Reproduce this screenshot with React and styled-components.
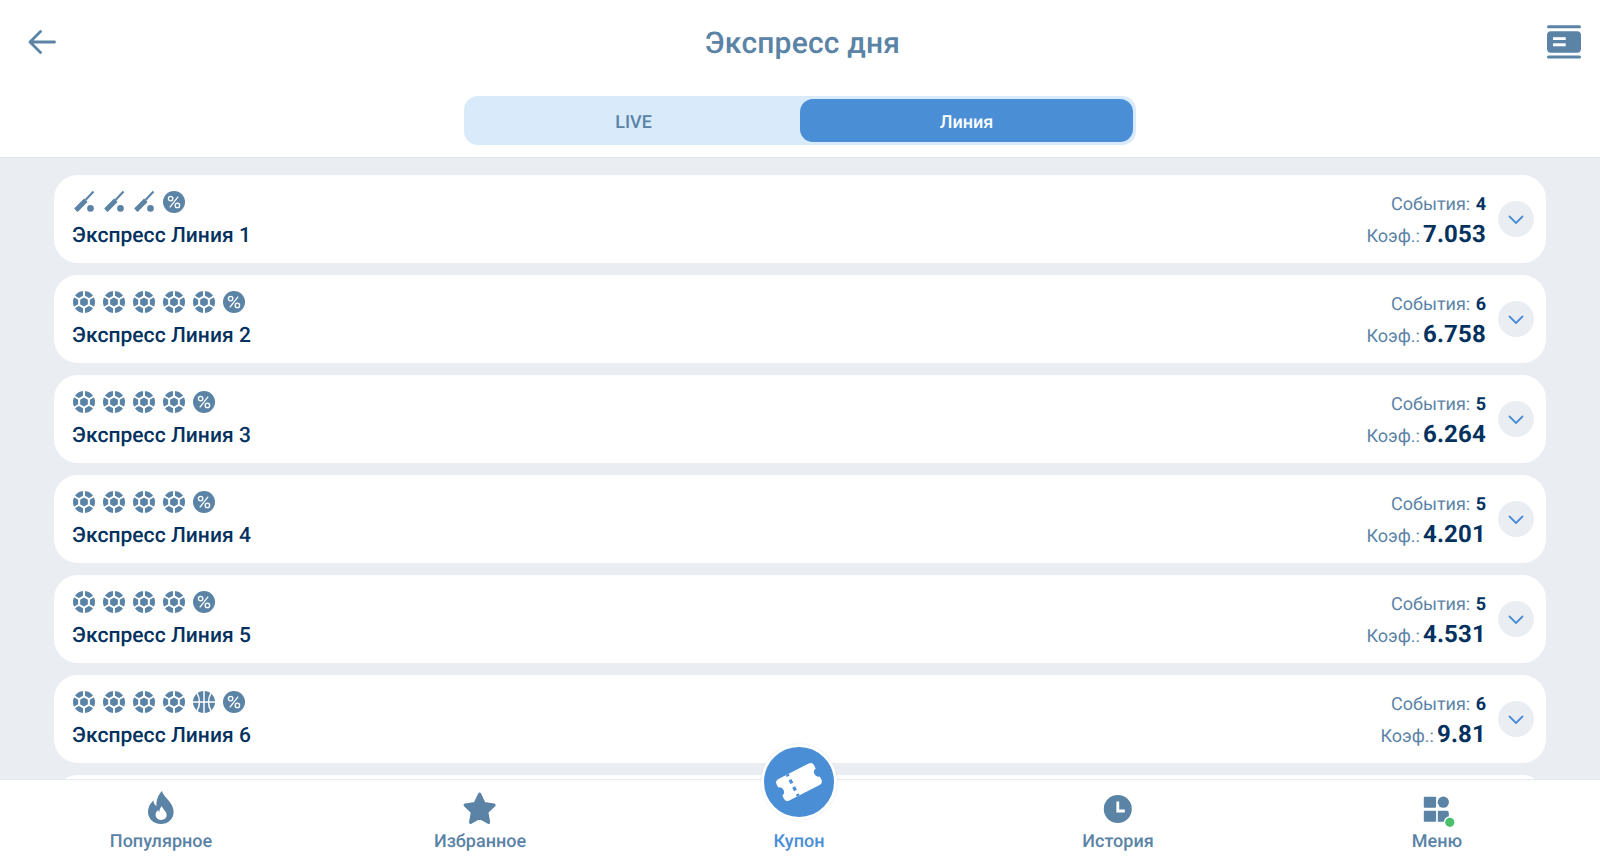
import React from "react";
import styled, { createGlobalStyle } from "styled-components";

const Global = createGlobalStyle`
  html, body { margin: 0; padding: 0; height: 100%; background: #fff; }
  body { font-family: Roboto, "Liberation Sans", sans-serif; overflow: hidden; text-rendering: geometricPrecision; }
  * { box-sizing: border-box; }
`;

const MUTED = "#5a83a6";
const DARK = "#04315e";
const BLUE = "#4a8ed6";
const GREY = "#eaeef3";

const Page = styled.div`
  width: 1600px; height: 864px; display: flex; flex-direction: column; background: ${GREY};
`;
const Header = styled.header`
  flex: 0 0 158px; background: #fff; border-bottom: 1px solid #dfe4ec;
  display: flex; flex-direction: column; padding: 0 19px 0 28px;
`;
const TopRow = styled.div`
  height: 96px; display: flex; align-items: flex-start; justify-content: space-between;
`;
const BackIcon = styled.svg`
  width: 28px; height: 24px; margin-top: 30px; display: block;
`;
const Title = styled.h1`
  margin: 27px 0 0 2px; font-size: 30px; line-height: 34px; font-weight: 500; color: ${MUTED}; letter-spacing: 0.2px;
`;
const BookIcon = styled.svg`
  width: 34px; height: 34px; margin-top: 25px; display: block;
`;
const Tabs = styled.div`
  align-self: center; margin-left: -9px; width: 672px; height: 49px; padding: 3px; border-radius: 14px;
  background: #d9ebfb; display: grid; grid-template-columns: 1fr 333px;
`;
const Tab = styled.div`
  display: flex; align-items: center; justify-content: center; border-radius: 13px; padding-top: 3px;
  font-size: 18px; font-weight: 500;
  color: ${(p) => (p.$active ? "#fff" : MUTED)};
  background: ${(p) => (p.$active ? BLUE : "transparent")};
`;
const List = styled.main`
  flex: 1; min-height: 0; overflow: hidden; padding: 17px 54px 0; display: flex; flex-direction: column; gap: 12px;
`;
const Card = styled.article`
  flex: 0 0 88px; background: #fff; border-radius: 24px; padding: 16px 12px 0 18px; display: flex; justify-content: space-between;
`;
const Left = styled.div`
  display: flex; flex-direction: column;
`;
const IconRow = styled.div`
  display: flex; gap: 8px; padding-left: 1px; height: 22px;
`;
const CardTitle = styled.div`
  margin-top: 9px; font-size: 21px; line-height: 28px; font-weight: 500; color: ${DARK}; letter-spacing: 0.05px;
`;
const Right = styled.div`
  display: flex; align-items: flex-start; gap: 12px;
`;
const Stats = styled.div`
  display: flex; flex-direction: column; align-items: flex-end;
`;
const Events = styled.div`
  margin-top: 2px; font-size: 18px; line-height: 24px; color: ${MUTED};
  b { font-weight: 700; color: ${DARK}; margin-left: 1px; }
`;
const Coef = styled.div`
  margin-top: 2px; display: flex; align-items: baseline; gap: 3px; font-size: 18px; line-height: 30px; color: ${MUTED};
  b { font-size: 24px; font-weight: 700; color: ${DARK}; letter-spacing: 0.2px; }
`;
const Expand = styled.button`
  margin-top: 10px; width: 36px; height: 36px; border: 0; padding: 1px 0 0; border-radius: 50%; background: ${GREY};
  display: flex; align-items: center; justify-content: center;
`;
const Nav = styled.nav`
  flex: 0 0 85px; background: #fff; border-top: 1px solid #e6eaf0; position: relative; padding-left: 1.5px;
  display: grid; grid-template-columns: repeat(5, 319px);
`;
const NavItem = styled.div`
  display: flex; flex-direction: column; align-items: center; justify-content: flex-end; padding-bottom: 11px;
  font-size: 18px; line-height: 22px; font-weight: 500;
  color: ${(p) => (p.$active ? BLUE : MUTED)};
`;
const NavIcon = styled.svg`
  width: 36px; height: 36px; display: block; margin-bottom: 3px; transform: translateY(-2px); overflow: visible;
`;
const Coupon = styled.div`
  position: absolute; left: 761px; top: -36px; width: 76px; height: 76px; border-radius: 50%;
  background: ${BLUE}; border: 3px solid #fff; box-shadow: 0 0 2px rgba(60, 80, 110, 0.18);
  display: flex; align-items: center; justify-content: center;
`;

const Ball = () => {
  const c = 11;
  const hex = [...Array(6)].map((_, i) => {
    const a = (Math.PI / 3) * i - Math.PI / 2;
    return [c + 5.6 * Math.cos(a), c + 5.6 * Math.sin(a)];
  });
  return (
    <svg width="22" height="22" viewBox="0 0 22 22">
      <circle cx="11" cy="11" r="11" fill={MUTED} />
      <polygon points={hex.map((p) => p.join(",")).join(" ")} fill={MUTED} stroke="#fff" strokeWidth="2" />
      {hex.map((p, i) => {
        const a = (Math.PI / 3) * i - Math.PI / 2;
        return <line key={i} x1={p[0]} y1={p[1]} x2={c + 12 * Math.cos(a)} y2={c + 12 * Math.sin(a)} stroke="#fff" strokeWidth="1.9" />;
      })}
    </svg>
  );
};

const Percent = () => (
  <svg width="22" height="22" viewBox="0 0 22 22">
    <circle cx="11" cy="11" r="11" fill={MUTED} />
    <circle cx="7.6" cy="7.6" r="2.2" fill="none" stroke="#fff" strokeWidth="1.3" />
    <circle cx="14.4" cy="14.4" r="2.2" fill="none" stroke="#fff" strokeWidth="1.3" />
    <line x1="15.2" y1="5.6" x2="6.8" y2="16.4" stroke="#fff" strokeWidth="1.3" />
  </svg>
);

const BatSvg = styled.svg`
  overflow: visible;
`;

const Bat = () => (
  <BatSvg width="22" height="22" viewBox="0 0 22 22">
    <path d="M1.6 16.9 L11.1 7.4 L14.6 10.9 L5.1 20.4 Q4.5 21 3.9 20.4 L1.6 18.1 Q1 17.5 1.6 16.9Z" fill={MUTED} />
    <line x1="12.5" y1="9" x2="20.5" y2="0.5" stroke={MUTED} strokeWidth="2.1" />
    <circle cx="17.5" cy="17.4" r="3.3" fill={MUTED} />
  </BatSvg>
);

const Basket = () => (
  <svg width="22" height="22" viewBox="0 0 22 22">
    <circle cx="11" cy="11" r="11" fill={MUTED} />
    <g fill="none" stroke="#fff" strokeWidth="1.5">
      <line x1="11" y1="0" x2="11" y2="22" />
      <line x1="0" y1="11" x2="22" y2="11" />
      <path d="M4 2 Q9 11 4 20" />
      <path d="M18 2 Q13 11 18 20" />
    </g>
  </svg>
);

const ICONS = { ball: Ball, bat: Bat, basket: Basket, pct: Percent };

const Chevron = () => (
  <svg width="16" height="10" viewBox="0 0 16 10">
    <path d="M1.5 1.5 L8 8 L14.5 1.5" fill="none" stroke={BLUE} strokeWidth="1.8" strokeLinecap="round" strokeLinejoin="round" />
  </svg>
);

const b = "ball";
const rows = [
  { n: 1, icons: ["bat", "bat", "bat", "pct"], ev: 4, k: "7.053" },
  { n: 2, icons: [b, b, b, b, b, "pct"], ev: 6, k: "6.758" },
  { n: 3, icons: [b, b, b, b, "pct"], ev: 5, k: "6.264" },
  { n: 4, icons: [b, b, b, b, "pct"], ev: 5, k: "4.201" },
  { n: 5, icons: [b, b, b, b, "pct"], ev: 5, k: "4.531" },
  { n: 6, icons: [b, b, b, b, "basket", "pct"], ev: 6, k: "9.81" },
];

export default function App() {
  return (
    <Page>
      <Global />
      <Header>
        <TopRow>
          <BackIcon viewBox="0 0 28 24">
            <path d="M26.5 12 H2 M12.5 1.5 L2 12 L12.5 22.5" fill="none" stroke={MUTED} strokeWidth="2.8" strokeLinecap="round" strokeLinejoin="round" />
          </BackIcon>
          <Title>Экспресс дня</Title>
          <BookIcon viewBox="0 0 34 34">
            <rect x="0" y="0.3" width="34" height="3" rx="1.5" fill={MUTED} />
            <rect x="0" y="6.3" width="34" height="21.4" rx="4" fill={MUTED} />
            <rect x="0" y="30.4" width="34" height="3" rx="1.5" fill={MUTED} />
            <rect x="6" y="12.2" width="12.7" height="2.8" fill="#fff" />
            <rect x="6" y="18.3" width="12.7" height="3" fill="#fff" />
          </BookIcon>
        </TopRow>
        <Tabs>
          <Tab>LIVE</Tab>
          <Tab $active>Линия</Tab>
        </Tabs>
      </Header>
      <List>
        {rows.map((r) => (
          <Card key={r.n}>
            <Left>
              <IconRow>
                {r.icons.map((k, i) => {
                  const I = ICONS[k];
                  return <I key={i} />;
                })}
              </IconRow>
              <CardTitle>Экспресс Линия {r.n}</CardTitle>
            </Left>
            <Right>
              <Stats>
                <Events>События: <b>{r.ev}</b></Events>
                <Coef>Коэф.:<b>{r.k}</b></Coef>
              </Stats>
              <Expand aria-label="Развернуть"><Chevron /></Expand>
            </Right>
          </Card>
        ))}
        <Card />
      </List>
      <Nav>
        <NavItem>
          <NavIcon viewBox="0 0 36 36">
            <path transform="translate(0 -0.5)" fillRule="evenodd" fill={MUTED} d="M19 1.5 C20.5 7 26 10 29 16 C31.5 21 31 27 27.5 30.5 C24.5 33.6 21 34.5 18 34.5 C10.5 34.5 5 29 5 22.5 C5 17.5 7.5 13.5 10.5 11 C10.5 13.5 11.5 15.5 13.5 16.5 C13 11 15 5.5 19 1.5 Z M18.8 16.5 C19.3 19.5 23.6 21.5 23.6 25.5 C23.6 28.8 21 30.4 18 30.4 C14.8 30.4 12.6 28 12.6 25.3 C12.6 23.1 13.7 21.7 15.3 20.6 C15.4 21.7 15.8 22.4 16.4 22.7 C16.3 20.5 17.1 18.2 18.8 16.5 Z" />
          </NavIcon>
          Популярное
        </NavItem>
        <NavItem>
          <NavIcon viewBox="0 0 36 36">
            <path transform="translate(17.6 18.6) scale(1.07) translate(-18 -18)" d="M18 4.5 L22.2 13.4 L31.5 14.7 L24.7 21.2 L26.4 30.8 L18 26.2 L9.6 30.8 L11.3 21.2 L4.5 14.7 L13.8 13.4 Z" fill={MUTED} stroke={MUTED} strokeWidth="3" strokeLinejoin="round" />
          </NavIcon>
          Избранное
        </NavItem>
        <NavItem $active>Купон</NavItem>
        <NavItem>
          <NavIcon viewBox="0 0 36 36">
            <g transform="translate(0.3 1)">
              <circle cx="17.5" cy="18" r="14" fill={MUTED} />
              <path d="M17.5 10.5 V20 H24.5" fill="none" stroke="#fff" strokeWidth="2.8" />
            </g>
          </NavIcon>
          История
        </NavItem>
        <NavItem>
          <NavIcon viewBox="0 0 36 36">
            <g transform="translate(0.3 1)">
              <rect x="4.5" y="5.7" width="12.3" height="11" rx="1" fill={MUTED} />
              <circle cx="24" cy="11.2" r="5.6" fill={MUTED} />
              <rect x="4.5" y="19.7" width="12.3" height="11" rx="1" fill={MUTED} />
              <path d="M18.5 19.7 H27.4 Q29.5 19.7 29.5 21.8 V30.7 H18.5 Z" fill={MUTED} />
              <circle cx="30.5" cy="31.3" r="6" fill="#fff" />
              <circle cx="30.5" cy="31.3" r="4.6" fill="#4bbf6b" />
            </g>
          </NavIcon>
          Меню
        </NavItem>
        <Coupon>
          <svg width="50" height="50" viewBox="0 0 50 50">
            <g transform="rotate(-27 25 25)">
              <path fill="#fff" d="M8 13 H42 Q46 13 46 17 V20.5 A4.6 4.6 0 0 0 46 29.5 V33 Q46 37 42 37 H8 Q4 37 4 33 V29.5 A4.6 4.6 0 0 0 4 20.5 V17 Q4 13 8 13 Z" />
              <line x1="18" y1="13" x2="18" y2="37" stroke={BLUE} strokeWidth="3.2" strokeDasharray="4 4" strokeDashoffset="2" />
            </g>
          </svg>
        </Coupon>
      </Nav>
    </Page>
  );
}
